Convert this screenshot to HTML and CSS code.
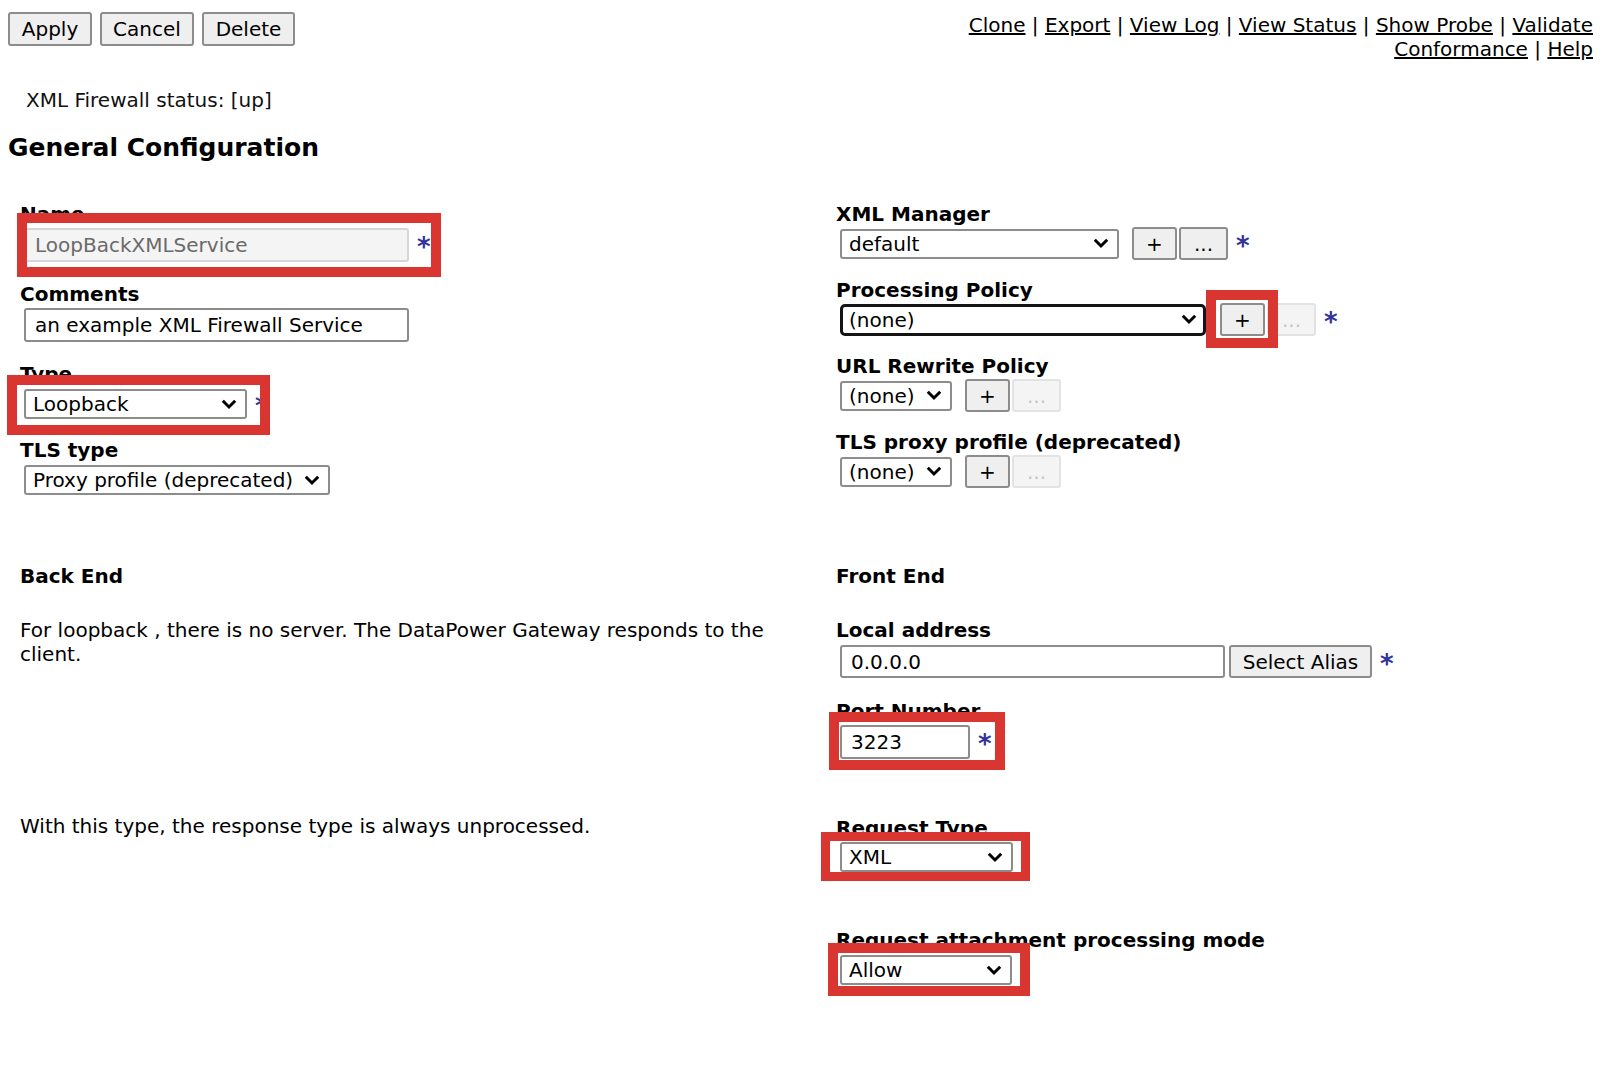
FILE: index.html
```html
<!DOCTYPE html>
<html lang="en">
<head>
<meta charset="utf-8">
<title>XML Firewall - General Configuration</title>
<link rel="stylesheet" href="styles.css">
</head>
<body>
<div class="page">
  <div class="topbar">
    <div class="actions">
      <button class="btn btn-apply">Apply</button>
      <button class="btn btn-cancel">Cancel</button>
      <button class="btn btn-delete">Delete</button>
    </div>
    <div class="links">
      <a href="#">Clone</a> | <a href="#">Export</a> | <a href="#">View Log</a> | <a href="#">View Status</a> | <a href="#">Show Probe</a> | <a href="#validate">Validate</a> <a href="#validate">Conformance</a> | <a href="#">Help</a>
    </div>
  </div>

  <div class="status">XML Firewall status: [up]</div>
  <h1 class="title">General Configuration</h1>

  <div class="columns upper">
    <div class="col">
      <div class="field mb20">
        <div class="label">Name</div>
        <div class="row mt2">
          <input class="text ro w-name" value="LoopBackXMLService" readonly>
          <span class="req">*</span>
          <span class="hl hl-name"></span>
        </div>
      </div>
      <div class="field mb20">
        <div class="label">Comments</div>
        <div class="row mt2">
          <input class="text w-name" value="an example XML Firewall Service">
        </div>
      </div>
      <div class="field mb19">
        <div class="label">Type</div>
        <div class="row mt3">
          <div class="select w-type"><span>Loopback</span><svg class="chev" viewBox="0 0 16 11" width="16" height="11"><path d="M1.8 1.8 L8 8 L14.2 1.8" fill="none" stroke="#000" stroke-width="3"/></svg></div>
          <span class="req">*</span>
          <span class="hl hl-type"></span>
        </div>
      </div>
      <div class="field">
        <div class="label">TLS type</div>
        <div class="row mt3">
          <div class="select w-tls"><span>Proxy profile (deprecated)</span><svg class="chev" viewBox="0 0 16 11" width="16" height="11"><path d="M1.8 1.8 L8 8 L14.2 1.8" fill="none" stroke="#000" stroke-width="3"/></svg></div>
        </div>
      </div>
    </div>

    <div class="col">
      <div class="field mb18">
        <div class="label">XML Manager</div>
        <div class="row mt1">
          <div class="select w-xmlmgr"><span>default</span><svg class="chev" viewBox="0 0 16 11" width="16" height="11"><path d="M1.8 1.8 L8 8 L14.2 1.8" fill="none" stroke="#000" stroke-width="3"/></svg></div>
          <button class="btn sm plus">+</button>
          <button class="btn sm dots">...</button>
          <span class="req">*</span>
        </div>
      </div>
      <div class="field mb18">
        <div class="label">Processing Policy</div>
        <div class="row mt1">
          <div class="select focus w-proc"><span>(none)</span><svg class="chev" viewBox="0 0 16 11" width="16" height="11"><path d="M1.8 1.8 L8 8 L14.2 1.8" fill="none" stroke="#000" stroke-width="3"/></svg></div>
          <span class="hlwrap">
            <button class="btn sm plus flush">+</button>
            <span class="hl hl-plus"></span>
          </span>
          <button class="btn sm dots" disabled>...</button>
          <span class="req">*</span>
        </div>
      </div>
      <div class="field mb18">
        <div class="label">URL Rewrite Policy</div>
        <div class="row mt1">
          <div class="select w-none"><span>(none)</span><svg class="chev" viewBox="0 0 16 11" width="16" height="11"><path d="M1.8 1.8 L8 8 L14.2 1.8" fill="none" stroke="#000" stroke-width="3"/></svg></div>
          <button class="btn sm plus">+</button>
          <button class="btn sm dots" disabled>...</button>
        </div>
      </div>
      <div class="field">
        <div class="label">TLS proxy profile (deprecated)</div>
        <div class="row mt1">
          <div class="select w-none"><span>(none)</span><svg class="chev" viewBox="0 0 16 11" width="16" height="11"><path d="M1.8 1.8 L8 8 L14.2 1.8" fill="none" stroke="#000" stroke-width="3"/></svg></div>
          <button class="btn sm plus">+</button>
          <button class="btn sm dots" disabled>...</button>
        </div>
      </div>
    </div>
  </div>

  <div class="columns lower">
    <div class="col">
      <div class="label">Back End</div>
      <p class="desc">For loopback , there is no server. The DataPower Gateway responds to the client.</p>
      <p class="note">With this type, the response type is always unprocessed.</p>
    </div>
    <div class="col">
      <div class="label">Front End</div>
      <div class="field sp-local">
        <div class="label">Local address</div>
        <div class="row mt3">
          <input class="text h33 w-local" value="0.0.0.0">
          <button class="btn alias">Select Alias</button>
          <span class="req">*</span>
        </div>
      </div>
      <div class="field sp-port">
        <div class="label">Port Number</div>
        <div class="row mt2">
          <input class="text w-port" value="3223">
          <span class="req">*</span>
          <span class="hl hl-port"></span>
        </div>
      </div>
      <div class="field sp-reqtype">
        <div class="label">Request Type</div>
        <div class="row mt2">
          <div class="select w-reqtype"><span>XML</span><svg class="chev" viewBox="0 0 16 11" width="16" height="11"><path d="M1.8 1.8 L8 8 L14.2 1.8" fill="none" stroke="#000" stroke-width="3"/></svg></div>
          <span class="hl hl-reqtype"></span>
        </div>
      </div>
      <div class="field sp-attach">
        <div class="label">Request attachment processing mode</div>
        <div class="row mt3">
          <div class="select w-attach"><span>Allow</span><svg class="chev" viewBox="0 0 16 11" width="16" height="11"><path d="M1.8 1.8 L8 8 L14.2 1.8" fill="none" stroke="#000" stroke-width="3"/></svg></div>
          <span class="hl hl-attach"></span>
        </div>
      </div>
    </div>
  </div>
</div>
</body>
</html>
```

FILE: styles.css
```css
* { box-sizing: border-box; }

html, body {
  margin: 0;
  background: #fff;
}

body {
  font-family: "DejaVu Sans", Verdana, sans-serif;
  font-size: 20px;
  color: #000;
}

.page {
  padding: 0 27px 70px 8px;
}

/* ---------- top bar ---------- */
.topbar {
  display: flex;
  justify-content: space-between;
  align-items: flex-start;
}

.actions {
  display: flex;
  gap: 8px;
  margin-top: 12px;
}

.btn {
  font-family: "DejaVu Sans", Verdana, sans-serif;
  font-size: 20px;
  color: #000;
  background: #efefef;
  border: 2px solid #8c8c8c;
  border-radius: 3px;
  height: 34px;
  padding: 0;
  display: inline-flex;
  align-items: center;
  justify-content: center;
  flex: none;
}

.btn-apply { width: 84px; }
.btn-cancel { width: 94px; }
.btn-delete { width: 93px; }

.links {
  width: 660px;
  text-align: right;
  line-height: 24px;
  margin-top: 13px;
}

.links a {
  color: #000;
  text-decoration: underline;
}

.status {
  margin: 27px 0 0 18px;
  line-height: 24px;
  color: #111;
}

.title {
  font-size: 25px;
  font-weight: bold;
  line-height: 30px;
  margin: 21px 0 0 0;
}

/* ---------- columns ---------- */
.columns {
  display: grid;
  grid-template-columns: 816px 1fr;
  padding-left: 12px;
  align-items: start;
}

.upper { margin-top: 39px; }
.lower { margin-top: 69px; }

.label {
  font-weight: bold;
  line-height: 24px;
  white-space: nowrap;
}

.mb20 { margin-bottom: 20px; }
.mb19 { margin-bottom: 19px; }
.mb18 { margin-bottom: 18px; }

.row {
  display: flex;
  align-items: center;
  position: relative;
  margin-left: 4px;
}

.mt1 { margin-top: 1px; }
.mt2 { margin-top: 2px; }
.mt3 { margin-top: 3px; }

/* ---------- controls ---------- */
.text {
  font-family: "DejaVu Sans", Verdana, sans-serif;
  font-size: 20px;
  color: #000;
  height: 34px;
  border: 2px solid #8c8c8c;
  border-radius: 3px;
  padding: 0 9px;
  background: #fff;
  flex: none;
}

.text.ro {
  background: #f4f4f4;
  border-color: #d6d6d6;
  color: #6a6a6a;
}

.h33 { height: 33px; }

.w-name { width: 385px; }
.w-local { width: 385px; }
.w-port { width: 130px; }

.select {
  display: flex;
  align-items: center;
  justify-content: space-between;
  height: 30px;
  border: 2px solid #8c8c8c;
  border-radius: 3px;
  padding: 0 8px 0 7px;
  background: #fff;
  line-height: 24px;
  white-space: nowrap;
  flex: none;
}

.select.focus {
  border: 3px solid #141414;
  border-radius: 5px;
  height: 32px;
  padding: 0 6px 0 6px;
}

.chev { flex: none; display: block; }

.w-type { width: 223px; }
.w-tls { width: 306px; }
.w-xmlmgr { width: 279px; }
.w-proc { width: 366px; }
.w-none { width: 112px; }
.w-reqtype { width: 173px; }
.w-attach { width: 172px; }

.btn.sm { height: 33px; }
.btn.plus { width: 45px; margin-left: 13px; }
.btn.plus.flush { margin-left: 0; }
.btn.dots { width: 49px; margin-left: 2px; }

.btn:disabled {
  color: #c6c6c6;
  background: #f4f4f4;
  border-color: #e3e3e3;
}

.btn.alias {
  width: 143px;
  height: 33px;
  margin-left: 4px;
}

.hlwrap {
  position: relative;
  display: flex;
  margin-left: 14px;
}

.req {
  font-weight: bold;
  font-size: 26px;
  line-height: 26px;
  color: #33339a;
  margin-left: 8px;
  margin-top: 4px;
  flex: none;
}

/* ---------- red annotation boxes ---------- */
.hl {
  position: absolute;
  border: 10px solid #d93632;
  pointer-events: none;
}

.hl-name { left: -7px; top: -15px; width: 424px; height: 64px; }
.hl-type { left: -17px; top: -14px; width: 263px; height: 60px; }
.hl-plus { left: -14px; top: -13px; width: 72px; height: 58px; }
.hl-port { left: -11px; top: -13px; width: 176px; height: 58px; }
.hl-reqtype { left: -19px; top: -10px; width: 209px; height: 49px; border-width: 9px; }
.hl-attach { left: -12px; top: -12px; width: 202px; height: 53px; }

/* ---------- lower section ---------- */
.desc {
  margin: 30px 0 0 0;
  max-width: 780px;
  line-height: 24px;
}

.note {
  margin: 148px 0 0 0;
  line-height: 24px;
}

.sp-local { margin-top: 30px; }
.sp-port { margin-top: 21px; }
.sp-reqtype { margin-top: 57px; }
.sp-attach { margin-top: 56px; }
```
